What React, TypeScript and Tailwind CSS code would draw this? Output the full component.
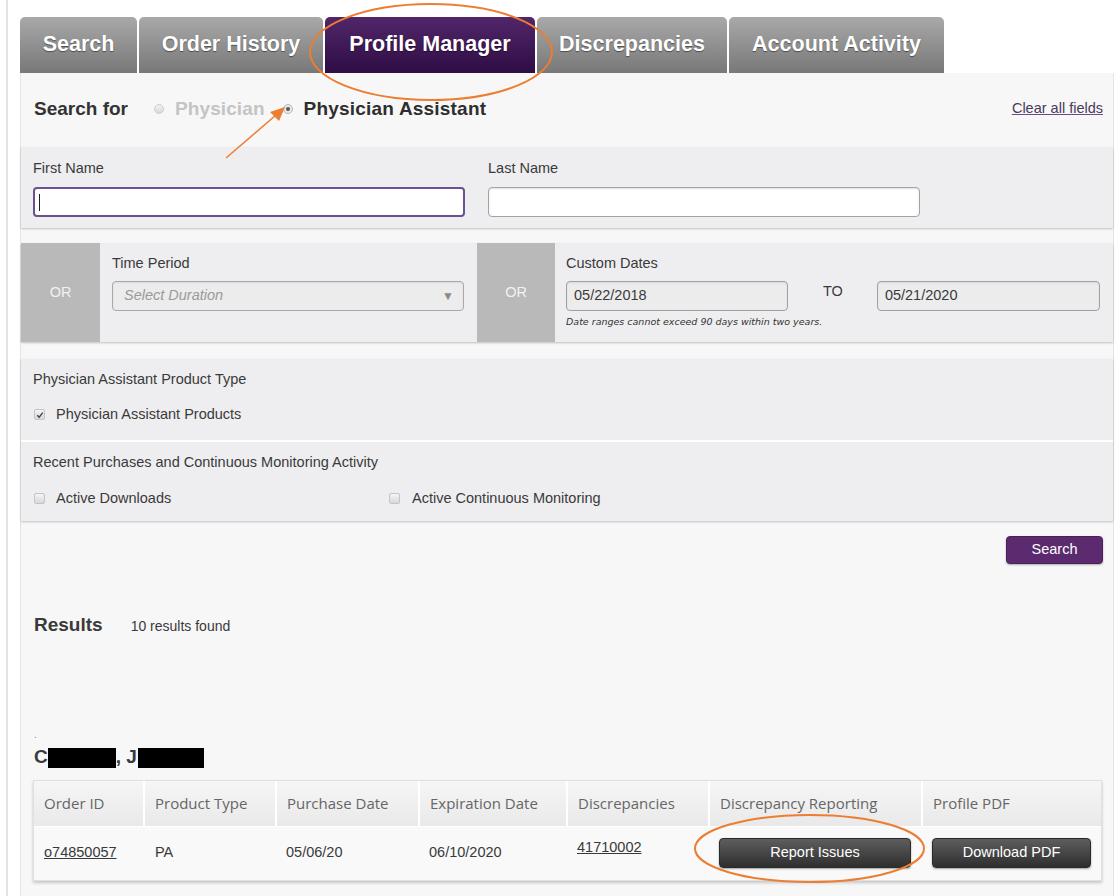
import React from "react";

const tabs = [
  { label: "Search", w: "w-[117px]", active: false },
  { label: "Order History", w: "w-[184px]", active: false },
  { label: "Profile Manager", w: "w-[210px]", active: true },
  { label: "Discrepancies", w: "w-[190px]", active: false },
  { label: "Account Activity", w: "w-[215px]", active: false },
];

const columns = [
  { label: "Order ID", w: "w-[109px]" },
  { label: "Product Type", w: "w-[132px]" },
  { label: "Purchase Date", w: "w-[143px]" },
  { label: "Expiration Date", w: "w-[148px]" },
  { label: "Discrepancies", w: "w-[142px]" },
  { label: "Discrepancy Reporting", w: "w-[213px]" },
  { label: "Profile PDF", w: "flex-1" },
];

function Checkbox({ checked }: { checked?: boolean }) {
  return (
    <span className="w-[11px] h-[11px] rounded-[2px] border border-[#c4c4c4] bg-gradient-to-b from-[#f4f4f4] to-[#d8d8d8] flex items-center justify-center">
      {checked && (
        <svg width="8" height="8" viewBox="0 0 8 8">
          <path d="M1.2 4.2 L3.2 6.2 L6.8 1.6" stroke="#444" strokeWidth="1.4" fill="none" />
        </svg>
      )}
    </span>
  );
}

function DarkButton({ label, w }: { label: string; w: string }) {
  return (
    <button className={`${w} h-[30px] rounded-[4px] border border-[#2a2a2a] bg-gradient-to-b from-[#5e5e5e] to-[#2f2f2f] text-white text-[14.5px] shadow-[0_1px_2px_rgba(0,0,0,0.35)]`}>
      {label}
    </button>
  );
}

export default function App() {
  return (
    <div className="relative w-[1115px] h-[896px] overflow-hidden bg-white font-['Liberation_Sans',Arial,sans-serif] text-[#333]">
      <div className="ml-[6px] h-full border-l-[2px] border-[#e2e2e2] pl-[12px] flex flex-col">
        {/* tab strip */}
        <div className="pt-[17px] flex gap-[2px]">
          {tabs.map((t) => (
            <div
              key={t.label}
              className={`${t.w} h-[56px] rounded-t-[5px] flex items-center justify-center pb-[1px] text-[21.5px] font-bold text-white [text-shadow:0_1px_1px_rgba(0,0,0,0.45)] ${
                t.active
                  ? "bg-gradient-to-b from-[#52266a] to-[#2f0d45]"
                  : "bg-gradient-to-b from-[#a9a9a9] to-[#787878]"
              }`}
            >
              {t.label}
            </div>
          ))}
        </div>

        {/* main panel */}
        <div className="w-[1094px] flex-1 bg-[#f7f7f7] border-l border-r border-[#e4e4e4] flex flex-col">
          {/* search-for row */}
          <div className="h-[74px] pb-[2px] flex items-center pl-[13px] pr-[10px]">
            <span className="text-[19px] font-bold text-[#333]">Search for</span>
            <span className="ml-[26px] w-[10px] h-[10px] rounded-full border border-[#cfcfcf] bg-gradient-to-b from-[#f2f2f2] to-[#d8d8d8]" />
            <span className="ml-[11px] text-[19px] font-bold text-[#c4c4c4] tracking-[0.1px]">Physician</span>
            <span className="ml-[18px] w-[10px] h-[10px] rounded-full border border-[#b8b8b8] bg-[#e8e8e8] flex items-center justify-center">
              <span className="w-[4px] h-[4px] rounded-full bg-[#555]" />
            </span>
            <span className="ml-[11px] text-[19px] font-bold text-[#2e2e2e] tracking-[0.2px]">Physician Assistant</span>
            <a className="ml-auto text-[14.5px] text-[#4a3a5c] underline decoration-[#6a4a8a]">Clear all fields</a>
          </div>

          {/* name fields */}
          <div className="h-[81px] bg-[#eeeef0] shadow-[0_1px_2px_rgba(0,0,0,0.22)] pt-[13px] pl-[12px] flex gap-[23px]">
            <div className="flex flex-col">
              <span className="text-[14.5px] leading-[17px] text-[#3a3a3a]">First Name</span>
              <div className="mt-[10px] w-[432px] h-[30px] rounded-[4px] border-2 border-[#6d5090] bg-white flex items-center pl-[4px]">
                <span className="w-[1px] h-[17px] bg-[#222]" />
              </div>
            </div>
            <div className="flex flex-col">
              <span className="text-[14.5px] leading-[17px] text-[#3a3a3a]">Last Name</span>
              <div className="mt-[10px] w-[432px] h-[30px] rounded-[4px] border border-[#a3a3a3] bg-white shadow-[inset_0_1px_2px_rgba(0,0,0,0.12)]" />
            </div>
          </div>

          {/* time period / custom dates */}
          <div className="mt-[15px] h-[99px] bg-[#eeeef0] shadow-[0_1px_2px_rgba(0,0,0,0.22)] flex">
            <div className="w-[79px] bg-[#b9b9b9] flex items-center justify-center text-[14.5px] text-[#f2f2f2]">OR</div>
            <div className="w-[377px] pl-[12px] pt-[12px] flex flex-col">
              <span className="text-[14.5px] leading-[17px] text-[#3a3a3a]">Time Period</span>
              <div className="mt-[9px] w-[352px] h-[30px] rounded-[4px] border border-[#a8a8a8] bg-[#ececec] flex items-center pl-[11px] pr-[9px] shadow-[inset_0_1px_2px_rgba(0,0,0,0.08)]">
                <span className="italic text-[14.5px] text-[#9a9a9a]">Select Duration</span>
                <span className="ml-auto text-[12px] text-[#8a8a8a]">▼</span>
              </div>
            </div>
            <div className="w-[78px] bg-[#b9b9b9] flex items-center justify-center text-[14.5px] text-[#f2f2f2]">OR</div>
            <div className="pl-[11px] pt-[12px] flex flex-col">
              <span className="text-[14.5px] leading-[17px] text-[#3a3a3a]">Custom Dates</span>
              <div className="mt-[9px] flex items-center">
                <div className="w-[222px] h-[30px] rounded-[4px] border border-[#a0a0a0] bg-[#ececec] flex items-center pl-[7px] text-[14.5px] text-[#3a3a3a] shadow-[inset_0_1px_2px_rgba(0,0,0,0.08)]">
                  05/22/2018
                </div>
                <span className="ml-[35px] mb-[8px] text-[14.5px] text-[#3a3a3a]">TO</span>
                <div className="ml-[34px] w-[223px] h-[30px] rounded-[4px] border border-[#a0a0a0] bg-[#ececec] flex items-center pl-[7px] text-[14.5px] text-[#3a3a3a] shadow-[inset_0_1px_2px_rgba(0,0,0,0.08)]">
                  05/21/2020
                </div>
              </div>
              <span className="mt-[5px] italic text-[9.5px] leading-[12px] text-[#333] font-['DejaVu_Sans',sans-serif]">
                Date ranges cannot exceed 90 days within two years.
              </span>
            </div>
          </div>

          {/* product type + activity filters */}
          <div className="mt-[17px] shadow-[0_1px_2px_rgba(0,0,0,0.22)]">
            <div className="h-[81px] bg-[#eeeef0] pl-[12px] pt-[12px] flex flex-col">
              <span className="text-[14.5px] leading-[17px] text-[#3a3a3a]">Physician Assistant Product Type</span>
              <div className="mt-[16px] flex items-center gap-[11px] pl-[1px]">
                <Checkbox checked />
                <span className="text-[14.5px] text-[#3a3a3a]">Physician Assistant Products</span>
              </div>
            </div>
            <div className="h-[2px] bg-white" />
            <div className="h-[79px] bg-[#eeeef0] pl-[12px] pt-[12px] flex flex-col">
              <span className="text-[14.5px] leading-[17px] text-[#3a3a3a]">Recent Purchases and Continuous Monitoring Activity</span>
              <div className="mt-[17px] flex items-center pl-[1px]">
                <div className="w-[355px] flex items-center gap-[11px]">
                  <Checkbox />
                  <span className="text-[14.5px] text-[#3a3a3a]">Active Downloads</span>
                </div>
                <div className="flex items-center gap-[12px]">
                  <Checkbox />
                  <span className="text-[14.5px] text-[#3a3a3a]">Active Continuous Monitoring</span>
                </div>
              </div>
            </div>
          </div>

          {/* search action */}
          <div className="mt-[15px] flex justify-end pr-[10px]">
            <button className="w-[97px] h-[28px] rounded-[4px] bg-[#5b2a6f] border border-[#4a1f5c] text-white text-[14.5px] shadow-[0_1px_2px_rgba(0,0,0,0.3)]">
              Search
            </button>
          </div>

          {/* results */}
          <div className="mt-[47px] pl-[13px] flex items-baseline">
            <span className="text-[19px] font-bold text-[#3a3a3a]">Results</span>
            <span className="ml-[28px] text-[14px] text-[#3a3a3a]">10 results found</span>
          </div>

          <div className="mt-[90px] pl-[13px] text-[10px] leading-[10px] text-[#888]">.</div>
          <div className="mt-[6px] pl-[13px] flex items-center h-[24px] text-[19px] font-bold text-[#3a3a3a]">
            <span>C</span>
            <span className="w-[68px] h-[20px] bg-black" />
            <span>, J</span>
            <span className="ml-[1px] w-[66px] h-[20px] bg-black" />
          </div>

          {/* order table */}
          <div className="mt-[10px] ml-[12px] w-[1069px] border border-[#e0e0e0] shadow-[0_2px_3px_rgba(0,0,0,0.2)]">
            <div className="h-[45px] flex bg-gradient-to-b from-[#f6f6f6] to-[#e9e9e9] font-['Open_Sans','Liberation_Sans',sans-serif]">
              {columns.map((c, i) => (
                <div
                  key={c.label}
                  className={`${c.w} flex items-center px-[10px] text-[15px] text-[#666] ${i > 0 ? "border-l-2 border-white" : ""}`}
                >
                  {c.label}
                </div>
              ))}
            </div>
            <div className="h-[54px] flex items-center bg-[#f9f9f9] border-t border-white text-[14.5px] text-[#3a3a3a]">
              <div className="w-[109px] px-[10px]">
                <span className="underline">o74850057</span>
              </div>
              <div className="w-[132px] px-[12px]">PA</div>
              <div className="w-[143px] px-[11px]">05/06/20</div>
              <div className="w-[148px] px-[11px]">06/10/2020</div>
              <div className="w-[142px] px-[11px] mb-[10px]">
                <span className="underline">41710002</span>
              </div>
              <div className="w-[213px] pl-[11px]">
                <DarkButton label="Report Issues" w="w-[192px]" />
              </div>
              <div className="flex-1 pl-[11px]">
                <DarkButton label="Download PDF" w="w-[159px]" />
              </div>
            </div>
          </div>
        </div>
      </div>

      {/* orange callouts */}
      <svg className="absolute inset-0 pointer-events-none" width="1115" height="896">
        <ellipse cx="431" cy="52" rx="121" ry="48" fill="none" stroke="#ec7d31" strokeWidth="2" />
        <ellipse cx="809.5" cy="848.5" rx="114.5" ry="33.5" fill="none" stroke="#ec7d31" strokeWidth="2" />
        <line x1="226" y1="158" x2="276" y2="115" stroke="#ec7d31" strokeWidth="1.5" />
        <polygon points="285,107 270,112 279,121" fill="#ec7d31" />
      </svg>
    </div>
  );
}
